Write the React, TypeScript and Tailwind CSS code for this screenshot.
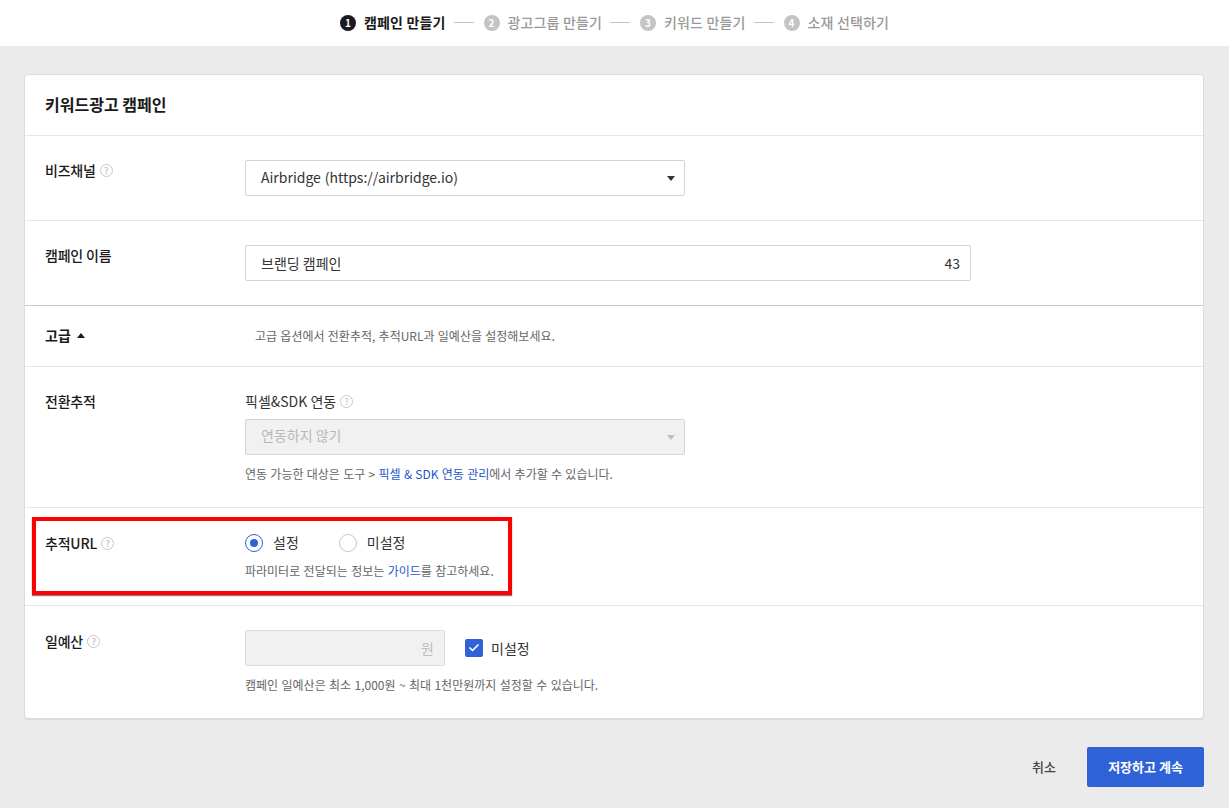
import { Check } from "lucide-react";

const font = { fontFamily: '"Noto Sans CJK KR", "Noto Sans", sans-serif' };

const steps = [
  { num: "1", label: "캠페인 만들기", active: true },
  { num: "2", label: "광고그룹 만들기", active: false },
  { num: "3", label: "키워드 만들기", active: false },
  { num: "4", label: "소재 선택하기", active: false },
];

function Help() {
  return (
    <span className="inline-flex h-[13px] w-[13px] shrink-0 items-center justify-center rounded-full border border-[#c8c8c8] text-[9px] leading-none text-[#bdbdbd]">
      ?
    </span>
  );
}

function Caret({ color }: { color: string }) {
  return (
    <svg width="8" height="5" viewBox="0 0 8 5" className="shrink-0">
      <path d="M0 0h8L4 5z" fill={color} />
    </svg>
  );
}

function RowLabel({ text, help }: { text: string; help?: boolean }) {
  return (
    <div className="flex w-[200px] shrink-0 items-center gap-[4px] self-start text-[14px] font-medium leading-[20px] tracking-[-0.2px] text-[#1a1a1a]">
      {text}
      {help && <Help />}
    </div>
  );
}

export default function App() {
  return (
    <div style={font} className="relative h-[808px] w-[1229px] overflow-hidden bg-[#ebebeb]">
      <header className="flex h-[46px] items-center justify-center bg-white pb-[1px]">
        <ol className="flex items-center">
          {steps.map((step, i) => (
            <li key={step.num} className="flex items-center">
              {i > 0 && <span className="ml-[8px] mr-[10px] h-px w-[20px] bg-[#c4c4c4]" />}
              <span
                className={`flex h-[16px] w-[16px] items-center justify-center rounded-full text-[10px] font-bold leading-none text-white ${
                  step.active ? "bg-[#1a1a22]" : "bg-[#c4c4c4]"
                }`}
              >
                {step.num}
              </span>
              <span
                className={`ml-[8px] text-[14px] tracking-[0.15px] ${
                  step.active ? "font-bold text-[#1a1a1a]" : "font-medium text-[#999999]"
                }`}
              >
                {step.label}
              </span>
            </li>
          ))}
        </ol>
      </header>

      <main className="px-[24px] pt-[28px]">
        <section className="h-[645px] w-[1180px] rounded-[4px] border border-[#dcdcdc] bg-white shadow-[0_1px_1px_rgba(0,0,0,0.08)]">
          <div className="flex h-[61px] items-center border-b border-[#e6e6e6] px-[20px] pb-[2px]">
            <h1 className="text-[16px] font-bold text-[#1a1a1a]">키워드광고 캠페인</h1>
          </div>

          <div className="flex h-[85px] border-b border-[#e6e6e6] pl-[20px] pt-[24px]">
            <RowLabel text="비즈채널" help />
            <div className="flex h-[36px] w-[440px] items-center justify-between rounded-[2px] border border-[#d4d4d4] pl-[15px] pr-[9px] text-[14px] text-[#333333] [word-spacing:0.7px]">
              <span className="pb-[2px]">Airbridge (https://airbridge.io)</span>
              <Caret color="#333333" />
            </div>
          </div>

          <div className="flex h-[85px] border-b border-[#c9c9c9] pl-[20px] pt-[24px]">
            <RowLabel text="캠페인 이름" />
            <div className="flex h-[36px] w-[726px] items-center justify-between rounded-[2px] border border-[#d4d4d4] pl-[15px] pr-[10px] text-[14px] text-[#333333]">
              <span>브랜딩 캠페인</span>
              <span>43</span>
            </div>
          </div>

          <div className="flex h-[61px] items-center border-b border-[#e6e6e6] pb-[1px] pl-[20px]">
            <div className="flex w-[210px] shrink-0 items-center gap-[6px] text-[14px] font-bold text-[#1a1a1a]">
              고급
              <svg width="8" height="5" viewBox="0 0 8 5">
                <path d="M4 0l4 5H0z" fill="#1a1a1a" />
              </svg>
            </div>
            <p className="text-[12px] text-[#666666] [word-spacing:0.6px]">
              고급 옵션에서 전환추적, 추적URL과 일예산을 설정해보세요.
            </p>
          </div>

          <div className="flex h-[141px] border-b border-[#e6e6e6] pl-[20px] pt-[24px]">
            <RowLabel text="전환추적" />
            <div>
              <div className="flex h-[20px] items-center gap-[4px] text-[14px] text-[#333333]">
                픽셀&SDK 연동
                <Help />
              </div>
              <div className="mt-[8px] flex h-[36px] w-[440px] items-center justify-between rounded-[2px] border border-[#d4d4d4] bg-[#f1f1f1] pl-[15px] pr-[9px] text-[14px] text-[#b8b8b8]">
                <span className="pb-[3px]">연동하지 않기</span>
                <Caret color="#c0c0c0" />
              </div>
              <p className="mt-[10px] text-[12px] leading-[18px] text-[#666666] [word-spacing:0.6px]">
                연동 가능한 대상은 도구 &gt; <span className="text-[#1f55c9]">픽셀 &amp; SDK 연동 관리</span>에서 추가할 수 있습니다.
              </p>
            </div>
          </div>

          <div className="flex h-[98px] border-b border-[#e6e6e6] pl-[20px] pt-[25px]">
            <RowLabel text="추적URL" help />
            <div>
              <div className="flex h-[20px] items-center text-[14px] text-[#333333]">
                <span className="flex h-[18px] w-[18px] items-center justify-center rounded-full border border-[#2f62d6] bg-white">
                  <span className="h-[8px] w-[8px] rounded-full bg-[#2f62d6]" />
                </span>
                <span className="ml-[10px] pb-[2px]">설정</span>
                <span className="ml-[40px] h-[18px] w-[18px] rounded-full border border-[#c8c8c8] bg-white" />
                <span className="ml-[10px] pb-[2px]">미설정</span>
              </div>
              <p className="mt-[9px] text-[12px] leading-[18px] text-[#666666] [word-spacing:0.7px]">
                파라미터로 전달되는 정보는 <span className="text-[#1f55c9]">가이드</span>를 참고하세요.
              </p>
            </div>
          </div>

          <div className="flex pl-[20px] pt-[24px]">
            <div className="mt-px">
              <RowLabel text="일예산" help />
            </div>
            <div>
              <div className="flex items-center">
                <div className="flex h-[36px] w-[200px] items-center justify-end rounded-[2px] border border-[#dcdcdc] bg-[#f1f1f1] pr-[10px] text-[14px] text-[#bdbdbd]">
                  원
                </div>
                <span className="ml-[20px] flex h-[18px] w-[18px] items-center justify-center rounded-[2px] bg-[#2f62d6]">
                  <Check size={12} strokeWidth={3.5} color="#ffffff" />
                </span>
                <span className="ml-[8px] text-[14px] text-[#333333]">미설정</span>
              </div>
              <p className="mt-[10px] text-[12px] leading-[18px] text-[#666666] [word-spacing:0.7px]">
                캠페인 일예산은 최소 1,000원 ~ 최대 1천만원까지 설정할 수 있습니다.
              </p>
            </div>
          </div>
        </section>

        <div className="mt-[28px] flex w-[1180px] items-center justify-end">
          <button className="mr-[31px] text-[13px] font-medium text-[#444444]">취소</button>
          <button className="h-[40px] w-[117px] rounded-[2px] bg-[#2f62d6] text-[13px] font-bold text-white">
            저장하고 계속
          </button>
        </div>
      </main>

      {/* annotation drawn over the screenshot */}
      <div className="absolute left-[32px] top-[517px] h-[78px] w-[480px] border-[4px] border-[#ff0000] shadow-[0_1px_1px_rgba(0,0,0,0.5)]" />
    </div>
  );
}
